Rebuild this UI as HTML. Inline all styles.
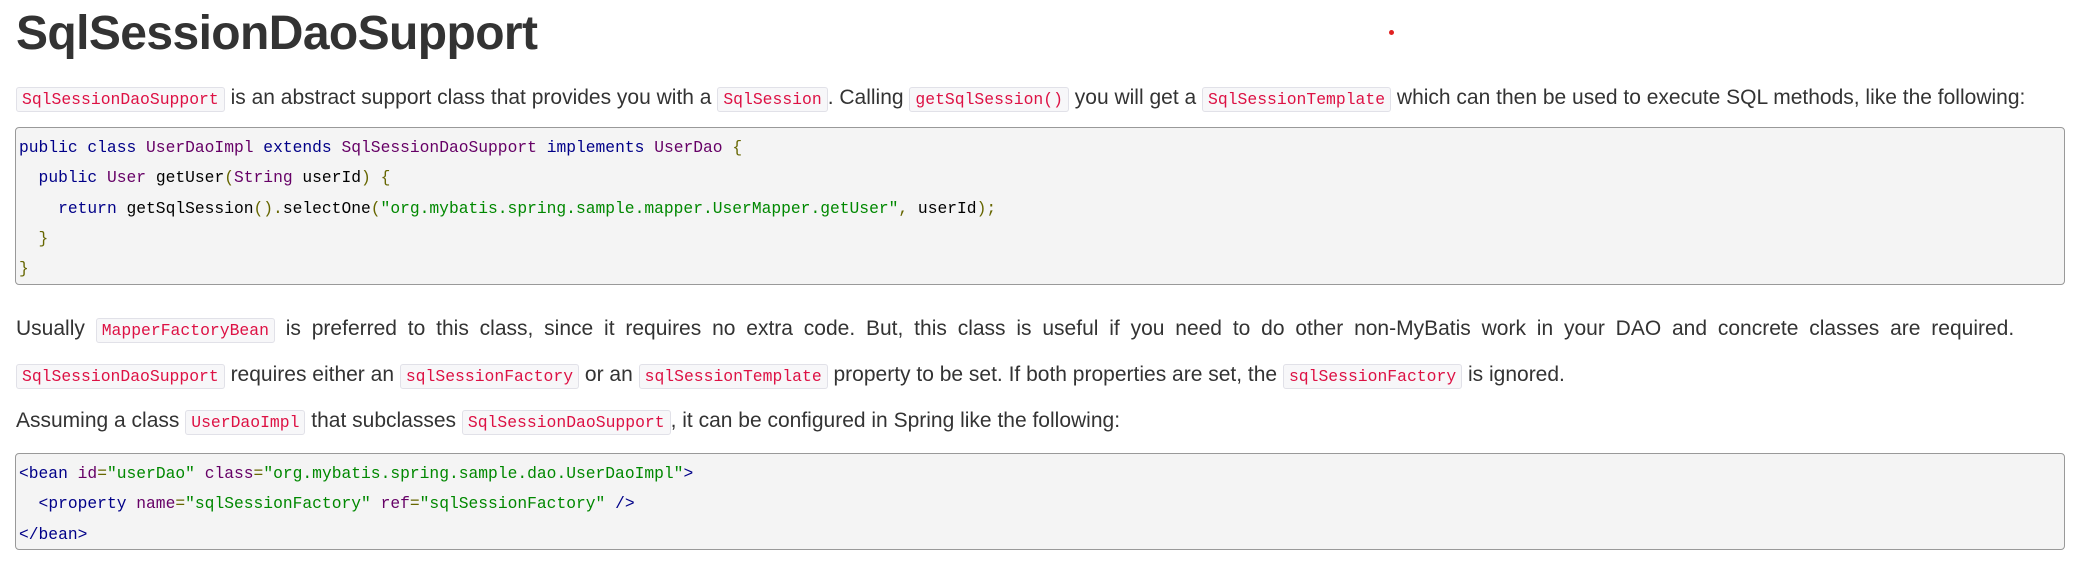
<!DOCTYPE html>
<html><head><meta charset="utf-8"><style>
body{margin:0;width:2077px;height:562px;background:#fff;position:relative;overflow:hidden;font-family:"Liberation Sans",Arial,sans-serif;color:#333}
h1{position:absolute;left:16px;top:6px;margin:0;font-size:48px;font-weight:bold;color:#333;letter-spacing:-0.6px}
.p{position:absolute;left:16px;font-size:21px;white-space:nowrap;line-height:30px}
code{font-family:"Liberation Mono",monospace;font-size:16.4px;color:#dd1144;background:#f7f7f9;border:1px solid #e1e1e8;border-radius:3px;padding:2px 5px}
pre{position:absolute;left:15px;width:2050px;margin:0;box-sizing:border-box;background:#f4f4f4;border:1px solid #999;border-radius:4px;font-family:"Liberation Mono",monospace;font-size:16.3px;line-height:30.3px;padding:5px 3px;color:#000}
.k{color:#008}.t{color:#606}.s{color:#080}.u{color:#660}
</style></head><body>
<h1>SqlSessionDaoSupport</h1>
<div style="position:absolute;left:1389px;top:30px;width:5px;height:5px;border-radius:50%;background:#e02020"></div>
<div class="p" style="top:83px"><code>SqlSessionDaoSupport</code> is an abstract support class that provides you with a <code>SqlSession</code>. Calling <code>getSqlSession()</code> you will get a <code>SqlSessionTemplate</code> which can then be used to execute SQL methods, like the following:</div>
<pre style="top:127px;height:158px"><span class="k">public class</span> <span class="t">UserDaoImpl</span> <span class="k">extends</span> <span class="t">SqlSessionDaoSupport</span> <span class="k">implements</span> <span class="t">UserDao</span> <span class="u">{</span>
  <span class="k">public</span> <span class="t">User</span> getUser<span class="u">(</span><span class="t">String</span> userId<span class="u">)</span> <span class="u">{</span>
    <span class="k">return</span> getSqlSession<span class="u">().</span>selectOne<span class="u">(</span><span class="s">"org.mybatis.spring.sample.mapper.UserMapper.getUser"</span><span class="u">,</span> userId<span class="u">);</span>
  <span class="u">}</span>
<span class="u">}</span></pre>
<div class="p" style="top:314px;word-spacing:5px">Usually <code style="word-spacing:0">MapperFactoryBean</code> is preferred to this class, since it requires no extra code. But, this class is useful if you need to do other non-MyBatis work in your DAO and concrete classes are required.</div>
<div class="p" style="top:360px"><code>SqlSessionDaoSupport</code> requires either an <code>sqlSessionFactory</code> or an <code>sqlSessionTemplate</code> property to be set. If both properties are set, the <code>sqlSessionFactory</code> is ignored.</div>
<div class="p" style="top:406px">Assuming a class <code>UserDaoImpl</code> that subclasses <code>SqlSessionDaoSupport</code>, it can be configured in Spring like the following:</div>
<pre style="top:453px;height:97px"><span class="k">&lt;bean</span> <span class="t">id</span><span class="u">=</span><span class="s">"userDao"</span> <span class="t">class</span><span class="u">=</span><span class="s">"org.mybatis.spring.sample.dao.UserDaoImpl"</span><span class="k">&gt;</span>
  <span class="k">&lt;property</span> <span class="t">name</span><span class="u">=</span><span class="s">"sqlSessionFactory"</span> <span class="t">ref</span><span class="u">=</span><span class="s">"sqlSessionFactory"</span> <span class="k">/&gt;</span>
<span class="k">&lt;/bean&gt;</span></pre>
</body></html>
